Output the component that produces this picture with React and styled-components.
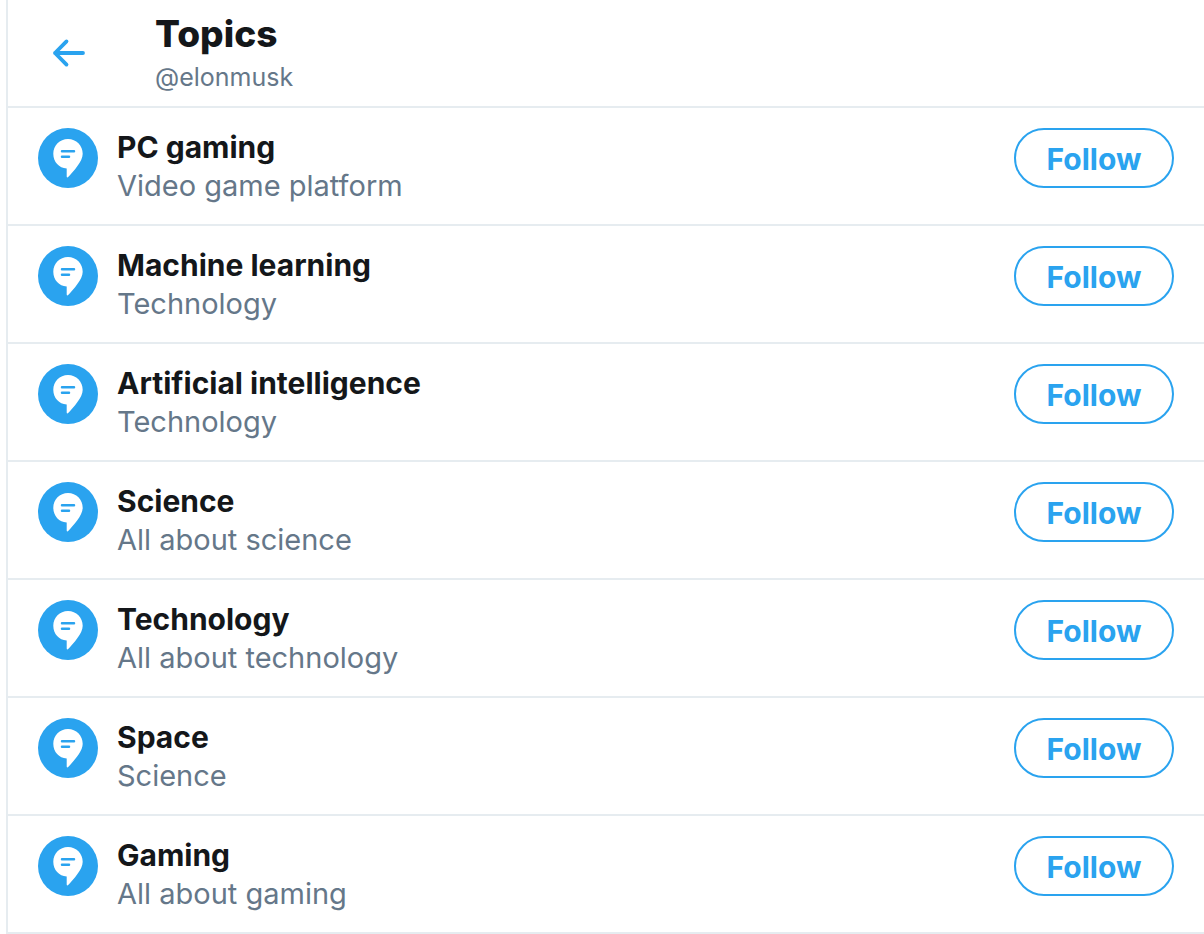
import * as React from "react";
import { useState } from "react";
import styled, { createGlobalStyle } from "styled-components";

const topics = [
  { name: "PC gaming", description: "Video game platform" },
  { name: "Machine learning", description: "Technology" },
  { name: "Artificial intelligence", description: "Technology" },
  { name: "Science", description: "All about science" },
  { name: "Technology", description: "All about technology" },
  { name: "Space", description: "Science" },
  { name: "Gaming", description: "All about gaming" },
];

function BackIcon() {
  return (
    <svg width="34" height="30" viewBox="0 0 34 30" aria-hidden="true">
      <path
        d="M15.5 3.4 4 15l11.5 11.6M4 15h28"
        fill="none"
        stroke="currentColor"
        strokeWidth="3.8"
        strokeLinecap="round"
        strokeLinejoin="round"
      />
    </svg>
  );
}

function TopicIcon() {
  return (
    <svg width="60" height="60" viewBox="0 0 60 60" aria-hidden="true">
      <circle cx="30" cy="30" r="30" fill="#2aa3ef" />
      <path
        d="M30 11C21.7 11 15.3 17.6 15.3 25.7c0 8.2 5.8 14.5 13.4 14.7v8.2c0 1 .9 1.200 1.5.5C35.5 43 44.7 33.6 44.7 25.7 44.7 17.6 38.3 11 30 11Z"
        fill="#fff"
      />
      <path
        d="M24 23.3h12M24 28.7h7"
        stroke="#2aa3ef"
        strokeWidth="2.5"
        strokeLinecap="round"
      />
    </svg>
  );
}

function TopicRow({ topic }) {
  const [isFollowing, setIsFollowing] = useState(false);

  return (
    <SRow>
      <TopicIcon />
      <STopicText>
        <SName>{topic.name}</SName>
        <SDescription>{topic.description}</SDescription>
      </STopicText>
      <SFollow
        type="button"
        $isFollowing={isFollowing}
        onClick={() => setIsFollowing((prev) => !prev)}
      >
        {isFollowing ? "Following" : "Follow"}
      </SFollow>
    </SRow>
  );
}

export default function App() {
  return (
    <>
      <GlobalStyle />
      <SPage>
        <SHeader>
          <SBack type="button" aria-label="Back">
            <BackIcon />
          </SBack>
          <div>
            <STitle>Topics</STitle>
            <SHandle>@elonmusk</SHandle>
          </div>
        </SHeader>
        <SList>
          {topics.map((topic) => (
            <TopicRow key={topic.name} topic={topic} />
          ))}
        </SList>
      </SPage>
    </>
  );
}

const GlobalStyle = createGlobalStyle`
  * {
    box-sizing: border-box;
  }
  body {
    margin: 0;
    background: #fff;
    color: #14171a;
    font-family: Inter, "Liberation Sans", sans-serif;
  }
  h1, h2, p, ul {
    margin: 0;
    padding: 0;
  }
`;

const SPage = styled.main`
  margin-left: 6px;
  border-left: 2px solid #e6ecf0;
`;

const SHeader = styled.header`
  display: flex;
  align-items: center;
  gap: 57px;
  min-height: 108px;
  padding: 0 30px;
  border-bottom: 2px solid #e6ecf0;
`;

const SBack = styled.button`
  display: flex;
  justify-content: center;
  align-items: center;
  width: 60px;
  height: 60px;
  padding: 0;
  border: none;
  border-radius: 50%;
  background: none;
  color: #2aa3ef;
  cursor: pointer;
`;

const STitle = styled.h1`
  font-size: 37px;
  font-weight: 800;
  line-height: 48px;
`;

const SHandle = styled.p`
  color: #657789;
  font-size: 25px;
  line-height: 38px;
`;

const SList = styled.ul`
  list-style: none;
`;

const SRow = styled.li`
  display: flex;
  align-items: flex-start;
  gap: 19px;
  padding: 20px 30px 18px;
  border-bottom: 2px solid #e6ecf0;
`;

const STopicText = styled.div`
  flex: 1;
  min-width: 0;
`;

const SName = styled.h2`
  font-size: 30px;
  font-weight: 700;
  line-height: 38px;
`;

const SDescription = styled.p`
  color: #657789;
  font-size: 29px;
  line-height: 40px;
`;

const SFollow = styled.button`
  min-width: 160px;
  height: 60px;
  padding: 2px 30px 0;
  border: 2px solid #2aa3ef;
  border-radius: 30px;
  background: ${(props) => (props.$isFollowing ? "#2aa3ef" : "transparent")};
  color: ${(props) => (props.$isFollowing ? "#fff" : "#2aa3ef")};
  font-family: inherit;
  font-size: 30px;
  font-weight: 700;
  cursor: pointer;
`;
